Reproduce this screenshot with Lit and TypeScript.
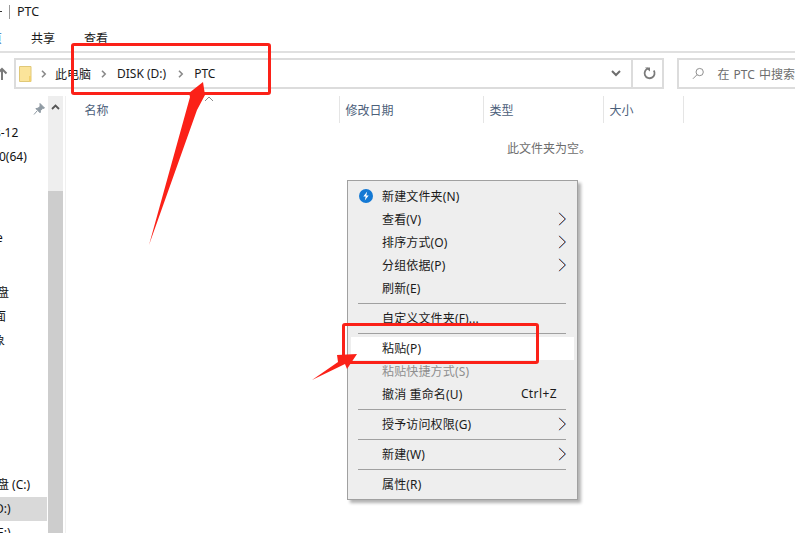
import { LitElement, html, css, svg } from "lit";
import { customElement } from "lit/decorators.js";

const chev = html`<svg class="sub" width="9" height="14" viewBox="0 0 9 14"><path d="M1.6 1l6.2 6-6.2 6" fill="none" stroke="#3b8fe0" stroke-width="1"/><path d="M.9 1l6.2 6-6.2 6" fill="none" stroke="#8a4a30" stroke-width="1"/></svg>`;
const crumb = html`<svg class="crumb" width="6" height="8" viewBox="0 0 6 8"><path d="M1 .8L4.2 4 1 7.2" fill="none" stroke="#8a8a8a" stroke-width="1.6"/></svg>`;

type Row = { t: string; off: number; gap?: number; sel?: boolean };
const rows: Row[] = [
  { t: "s-12", off: -5, gap: 0 },
  { t: "0(64)", off: -1 },
  { t: "e", off: -4, gap: 57 },
  { t: "盘", off: -3, gap: 31 },
  { t: "面", off: -6 },
  { t: "象", off: -7 },
  { t: "盘 (C:)", off: -3, gap: 120 },
  { t: "D:)", off: -5, sel: true },
  { t: "E:)", off: -3 },
];

@customElement("app-root")
export class AppRoot extends LitElement {
  static styles = css`
    :host {
      display: block; width: 795px; height: 534px; position: relative; overflow: hidden; background: #fff;
      font-family: "Noto Sans", "Noto Sans CJK SC", sans-serif; font-size: 12px; color: #1a1a1a;
    }
    .title { height: 23px; display: flex; align-items: center; font-size: 12.5px; gap: 7px; }
    .title s { width: 2px; height: 1px; background: #333; }
    .title i { width: 1px; height: 14px; background: #9a9a9a; }
    .tabs { height: 30px; box-sizing: border-box; display: flex; align-items: center; gap: 29px; padding: 3px 0 0 31px; border-bottom: 2px solid #e0e0e0; position: relative; overflow: hidden; }
    .tabs span { line-height: 25px; }
    .tabs .home { position: absolute; left: -22px; color: #2a6fb5; }
    .addr { height: 31px; margin-top: 5px; display: flex; position: relative; }
    .up { position: absolute; left: -4px; top: 9px; }
    .bar { margin-left: 14px; width: 650px; box-sizing: border-box; border: 2px solid #dcdcdc; display: flex; align-items: center; padding-left: 3px; }
    .folder { margin-right: 9px; }
    .path { display: flex; align-items: center; flex: 1; font-size: 12px; }
    .path span { margin: 0 10px; }
    .path .p1 { margin-left: 8px; }
    .path .p2 { margin-right: 12px; }
    .drop { width: 30px; height: 100%; display: flex; align-items: center; justify-content: center; }
    .refresh { width: 31px; box-sizing: border-box; height: 100%; border-left: 2px solid #dcdcdc; display: flex; align-items: center; justify-content: center; padding-left: 3px; }
    .search { margin-left: 13px; flex: 1; border: 2px solid #dcdcdc; border-right: 0; display: flex; align-items: center; padding-left: 13px; gap: 13px; color: #6d6d6d; white-space: nowrap; overflow: hidden; word-spacing: 1px; }
    .body { display: flex; height: 437px; margin-top: 7px; }
    .side { width: 48px; position: relative; overflow: hidden; padding-top: 25px; flex: none; }
    .pin { position: absolute; left: 33px; top: 7px; }
    .row { height: 24px; line-height: 24px; white-space: nowrap; color: #111; }
    .row.sel { background: #d9d9d9; width: 47px; }
    .scroll { width: 15px; flex: none; background: #cdcdcd; display: flex; flex-direction: column; }
    .scroll div { height: 95px; background: #eeeeee; display: flex; justify-content: center; padding-top: 8px; box-sizing: border-box; }
    .rule { width: 1px; margin-left: 2px; background: #f0f0f0; flex: none; }
    .main { flex: 1; position: relative; }
    .head { display: flex; height: 27px; align-items: center; color: #4c607a; position: relative; }
    .head div { height: 100%; display: flex; align-items: center; padding-left: 6px; box-sizing: border-box; border-right: 1px solid #e5e5e5; flex: none; }
    .head .c1 { width: 273.5px; padding-left: 18.5px; }
    .head .c2 { width: 144px; }
    .head .c3 { width: 120px; }
    .head .c4 { width: 80px; }
    .caret { position: absolute; left: 138px; top: 0; }
    .empty { color: #6d6d6d; margin-top: 17px; padding-left: 441px; line-height: 18px; }

    .menu {
      position: absolute; left: 347px; top: 180px; width: 231px; height: 320px; box-sizing: border-box;
      border: 1px solid #a0a0a0; background: #eeeeee; padding: 4px 3px 3px 3px; box-shadow: 3px 3px 3px rgba(0,0,0,.3);
    }
    .mi { height: 23px; display: flex; align-items: center; padding-left: 31px; padding-right: 17px; position: relative; color: #1a1a1a; letter-spacing: .15px; }
    .mi b { font-weight: normal; flex: 1; margin-bottom: 2px; }
    .mi span { margin-bottom: 2px; letter-spacing: .4px; }
    .mi.hl { background: #fff; }
    .mi.dis { color: #8f8f8f; }
    .mi .sub { position: absolute; right: 7px; top: 4px; }
    .mi .bolt { position: absolute; left: 8px; top: 4px; }
    .sep { height: 1px; background: #a0a0a0; margin: 3px 8px 3px 7px; }

    .anno { position: absolute; left: 0; top: 0; pointer-events: none; }
    .box { position: absolute; border: 3px solid #fb2118; border-radius: 3px; box-sizing: border-box; }
    .b1 { left: 71px; top: 43px; width: 200px; height: 52px; }
    .b2 { left: 342px; top: 323px; width: 197px; height: 41px; }
  `;

  render() {
    return html`
      <div class="title"><s></s><i></i><span>PTC</span></div>
      <div class="tabs"><span class="home">主页</span><span>共享</span><span>查看</span></div>
      <div class="addr">
        <svg class="up" width="12" height="14" viewBox="0 0 12 14"><path d="M6 2v11M1.5 6.5L6 2l4.5 4.5" fill="none" stroke="#7a7a7a" stroke-width="2"/></svg>
        <div class="bar">
          <svg class="folder" width="13" height="16" viewBox="0 0 13 16"><path d="M.5.5h11.5v15H.5z" fill="#fbe49a" stroke="#e0c878"/><path d="M10 10h2v5.5h-2z" fill="#f2d16e"/></svg>
          <div class="path">
            ${crumb}<span class="p1">此电脑</span>${crumb}<span class="p2">DISK (D:)</span>${crumb}<span>PTC</span>
          </div>
          <div class="drop"><svg width="10" height="7" viewBox="0 0 10 7"><path d="M1 1l4 4 4-4" fill="none" stroke="#6d6d6d" stroke-width="2"/></svg></div>
          <div class="refresh"><svg width="13" height="13" viewBox="0 0 13 13"><path d="M3.5 2.2A5 5 0 1 0 9.5 2.2" transform="rotate(20 6.5 6.5)" fill="none" stroke="#7a7a7a" stroke-width="1.8"/><path d="M2 .5h5v4z" fill="#7a7a7a"/></svg></div>
        </div>
        <div class="search">
          <svg width="13" height="13" viewBox="0 0 13 13"><circle cx="8" cy="5" r="3.8" fill="none" stroke="#8a8a8a"/><path d="M5.2 7.8L1 12" stroke="#8a8a8a"/></svg>
          <span>在 PTC 中搜索</span>
        </div>
      </div>
      <div class="body">
        <div class="side">
          <svg class="pin" width="12" height="12" viewBox="0 0 12 12"><path d="M7 .5l4.5 4.5-2 .6-2 2-.4 2.2-4.2-4.2 2.2-.4 2-2zM4 8l-3 3.5" fill="#8f9aa3" stroke="#8f9aa3"/></svg>
          ${rows.map(r => html`<div class="row ${r.sel ? "sel" : ""}" style="margin-top:${r.gap ?? 0}px;text-indent:${r.off}px">${r.t}</div>`)}
        </div>
        <div class="scroll"><div><svg width="9" height="6" viewBox="0 0 9 6"><path d="M1 5l3.5-3.5L8 5" fill="none" stroke="#555" stroke-width="1.8"/></svg></div></div>
        <div class="rule"></div>
        <div class="main">
          <div class="head">
            <div class="c1">名称</div><div class="c2">修改日期</div><div class="c3">类型</div><div class="c4">大小</div>
            <svg class="caret" width="10" height="6" viewBox="0 0 10 6"><path d="M1 5l4-4 4 4" fill="none" stroke="#8a8a8a"/></svg>
          </div>
          <div class="empty">此文件夹为空。</div>
        </div>
      </div>

      <div class="menu">
        <div class="mi">
          <svg class="bolt" width="14" height="14" viewBox="0 0 14 14"><circle cx="7" cy="7" r="7" fill="#1479d4"/><path d="M8.2 2.6L4.3 7.6h2.4L5.8 11.4 9.7 6.4H7.3z" fill="#fff"/></svg>
          <b>新建文件夹(N)</b></div>
        <div class="mi"><b>查看(V)</b>${chev}</div>
        <div class="mi"><b>排序方式(O)</b>${chev}</div>
        <div class="mi"><b>分组依据(P)</b>${chev}</div>
        <div class="mi"><b>刷新(E)</b></div>
        <div class="sep"></div>
        <div class="mi"><b>自定义文件夹(F)...</b></div>
        <div class="sep"></div>
        <div class="mi hl"><b>粘贴(P)</b></div>
        <div class="mi dis"><b>粘贴快捷方式(S)</b></div>
        <div class="mi"><b>撤消 重命名(U)</b><span>Ctrl+Z</span></div>
        <div class="sep"></div>
        <div class="mi"><b>授予访问权限(G)</b>${chev}</div>
        <div class="sep"></div>
        <div class="mi"><b>新建(W)</b>${chev}</div>
        <div class="sep"></div>
        <div class="mi"><b>属性(R)</b></div>
      </div>

      <div class="box b1"></div>
      <div class="box b2"></div>
      <svg class="anno" width="795" height="534" viewBox="0 0 795 534">
        ${svg`<path d="M149 245L190 97 L189 93L203 82L205 95L197 110Z" fill="#fb2118"/>
        <path d="M312 380L338 362L337 355L357 354L347 369L345 364Z" fill="#fb2118"/>`}
      </svg>
    `;
  }
}
